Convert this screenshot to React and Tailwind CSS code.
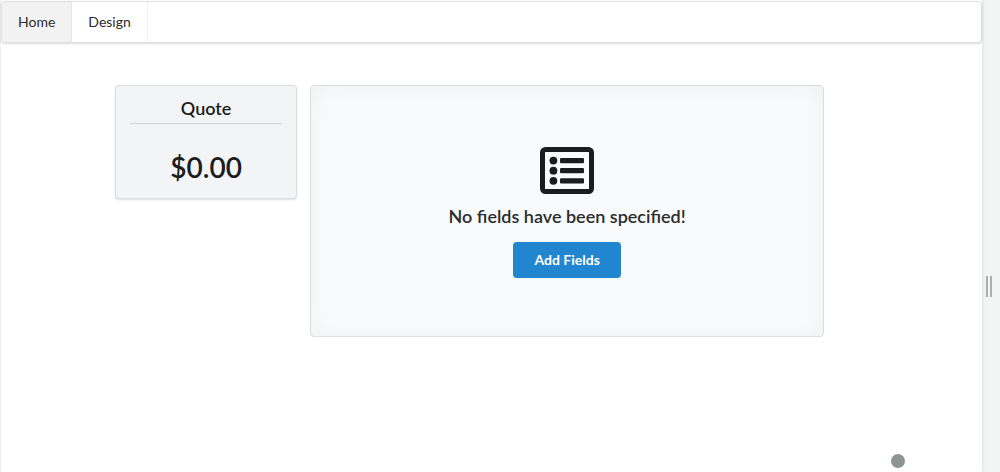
function ListIcon() {
  return (
    <svg viewBox="0 0 54 47" className="h-[47px] w-[54px]" fill="none" aria-hidden="true">
      <rect x="2.5" y="2.5" width="49" height="42" rx="3" stroke="#1b1c1d" strokeWidth="5" />
      {[13.6, 23.7, 33.8].map((y) => (
        <g key={y} fill="#1b1c1d">
          <circle cx="13.4" cy={y} r="3.9" />
          <rect x="20" y={y - 2.6} width="24" height="5.2" rx="1.2" />
        </g>
      ))}
    </svg>
  );
}

function Menu() {
  return (
    <nav className="mt-px flex h-[42px] rounded border border-[#dededf] bg-white text-sm text-[#2b2c2d] shadow-[0_1px_2px_0_rgba(34,36,38,0.15)]">
      <a href="#home" className="flex items-center rounded-l border-r border-[#e8e8e9] bg-[#f2f2f2] px-4">
        Home
      </a>
      <a href="#design" className="flex items-center border-r border-[#efefef] px-4">
        Design
      </a>
    </nav>
  );
}

function QuoteCard() {
  return (
    <section className="rounded border border-[#dcdddf] bg-[#f3f4f5] px-3.5 pt-2.5 pb-3 text-center text-[#1b1c1d] shadow-[0_1px_2px_0_rgba(34,36,38,0.15)]">
      <h2 className="border-b border-[#d4d4d5] pb-[3px] text-lg leading-6 font-semibold">Quote</h2>
      <p className="mt-6 text-[28px] leading-[38px] font-semibold">$0.00</p>
    </section>
  );
}

function EmptyFields() {
  return (
    <section className="flex min-h-[252px] flex-col items-center justify-center rounded border border-[#dcddde] bg-[#f9fafb] pt-0.5 shadow-[inset_0_2px_25px_0_rgba(34,36,38,0.04)]">
      <ListIcon />
      <h2 className="mt-2.5 text-lg leading-6 font-semibold text-[#2b2d2f]">No fields have been specified!</h2>
      <button type="button" className="mt-3.5 h-9 rounded bg-[#2185d0] px-[21px] text-sm font-bold text-white">
        Add Fields
      </button>
    </section>
  );
}

export default function App() {
  return (
    <div className="flex min-h-screen bg-[#f3f4f4] font-['Lato',sans-serif]">
      <main className="relative flex-1 border-l border-[#eeeeee] bg-white shadow-[0_0_4px_0_rgba(34,36,38,0.15)]">
        <Menu />
        <div className="mt-[42px] grid grid-cols-[182fr_513fr] items-start gap-[13px] pr-[158px] pl-[114px]">
          <QuoteCard />
          <EmptyFields />
        </div>
        <span className="absolute right-[77px] bottom-1 size-3.5 rounded-full bg-[#8e9394]" />
      </main>
      <div role="separator" aria-orientation="vertical" className="flex w-[18px] items-center justify-center gap-0.5 pt-[101px] pr-1">
        <span className="h-[21px] w-0.5 bg-[#adb0b1]" />
        <span className="h-[21px] w-0.5 bg-[#adb0b1]" />
      </div>
    </div>
  );
}
